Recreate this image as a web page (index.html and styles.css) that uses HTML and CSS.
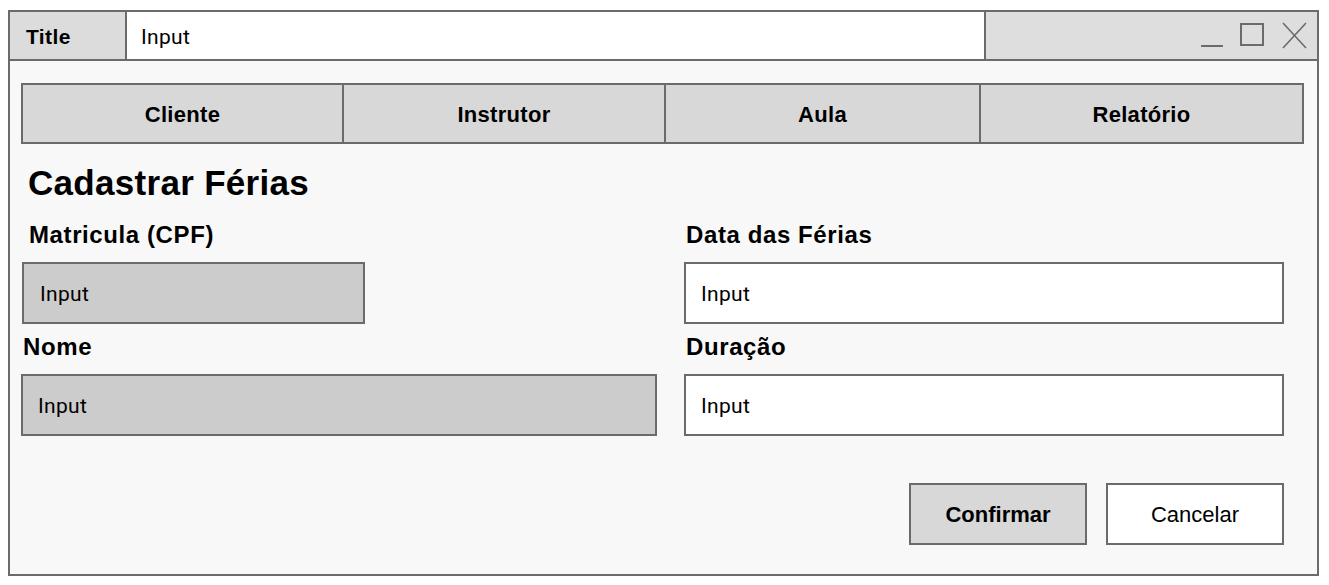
FILE: index.html
```html
<!DOCTYPE html>
<html lang="pt">
<head>
<meta charset="utf-8">
<title>Cadastrar Férias</title>
<link rel="stylesheet" href="styles.css">
</head>
<body>
<div class="window">
  <div class="titlebar">
    <div class="title-cell">Title</div>
    <div class="title-input">Input</div>
    <div class="controls">
      <svg width="110" height="30" viewBox="0 0 110 30" class="ctrl-icons">
        <line x1="4" y1="24" x2="26" y2="24" stroke="#6b6b6b" stroke-width="2"/>
        <rect x="44" y="2" width="22" height="21" fill="none" stroke="#6b6b6b" stroke-width="2"/>
        <line x1="86" y1="1" x2="109" y2="26" stroke="#6b6b6b" stroke-width="1.6"/>
        <line x1="109" y1="1" x2="86" y2="26" stroke="#6b6b6b" stroke-width="1.6"/>
      </svg>
    </div>
  </div>
  <div class="content">
    <nav class="tabs">
      <div class="tab">Cliente</div>
      <div class="tab">Instrutor</div>
      <div class="tab">Aula</div>
      <div class="tab">Relatório</div>
    </nav>
    <h1 class="heading">Cadastrar Férias</h1>
    <div class="form">
      <div class="field">
        <label class="label label-indent">Matricula (CPF)</label>
        <div class="input input-grey input-short">Input</div>
      </div>
      <div class="field">
        <label class="label">Data das Férias</label>
        <div class="input">Input</div>
      </div>
      <div class="field">
        <label class="label">Nome</label>
        <div class="input input-grey">Input</div>
      </div>
      <div class="field">
        <label class="label">Duração</label>
        <div class="input">Input</div>
      </div>
    </div>
    <div class="actions">
      <button class="btn btn-primary">Confirmar</button>
      <button class="btn">Cancelar</button>
    </div>
  </div>
</div>
</body>
</html>
```

FILE: styles.css
```css
html, body {
  margin: 0;
  padding: 0;
  background: #ffffff;
}

body {
  font-family: "Liberation Sans", Arial, sans-serif;
  color: #000;
}

.window {
  margin: 10px 0 0 8px;
  width: 1311px;
  height: 566px;
  box-sizing: border-box;
  border: 2px solid #6b6b6b;
  background: #f8f8f8;
  display: flex;
  flex-direction: column;
}

.titlebar {
  display: flex;
  height: 47px;
  border-bottom: 2px solid #6b6b6b;
  flex: none;
}

.title-cell {
  width: 117px;
  box-sizing: border-box;
  background: #dcdcdc;
  border-right: 2px solid #6b6b6b;
  padding: 3px 0 0 16px;
  display: flex;
  align-items: center;
  font-weight: bold;
  font-size: 21px;
  letter-spacing: 0.4px;
}

.title-input {
  width: 859px;
  box-sizing: border-box;
  background: #ffffff;
  border-right: 2px solid #6b6b6b;
  padding: 2px 0 0 14px;
  display: flex;
  align-items: center;
  font-family: Roboto, "Liberation Sans", sans-serif;
  font-size: 21px;
  letter-spacing: 0.3px;
}

.controls {
  flex: 1;
  background: #dedede;
  display: flex;
  align-items: center;
  justify-content: flex-end;
  padding-right: 10px;
}

.ctrl-icons {
  display: block;
  margin-top: 2px;
}

.content {
  flex: 1;
  padding: 22px 13px 0 11px;
  display: flex;
  flex-direction: column;
}

.tabs {
  display: grid;
  grid-template-columns: 319px 322px 315px 1fr;
  height: 61px;
  box-sizing: border-box;
  border: 2px solid #6b6b6b;
  background: #d8d8d8;
}

.tab {
  display: flex;
  align-items: center;
  justify-content: center;
  padding-top: 2px;
  font-weight: bold;
  font-size: 22px;
  letter-spacing: 0.3px;
  border-left: 2px solid #6b6b6b;
}

.tab:first-child {
  border-left: none;
}

.heading {
  margin: 20px 0 0 7px;
  font-size: 35px;
  font-weight: bold;
  line-height: 38px;
  letter-spacing: 0.3px;
}

.form {
  margin-top: 20px;
  display: grid;
  grid-template-columns: 636px 600px;
  column-gap: 27px;
  row-gap: 10px;
}

.field {
  display: flex;
  flex-direction: column;
}

.label {
  font-weight: bold;
  font-size: 24px;
  line-height: 26px;
  letter-spacing: 0.6px;
  margin: 0 0 14px 2px;
}

.label-indent {
  margin-left: 8px;
}

.input {
  height: 62px;
  box-sizing: border-box;
  border: 2px solid #6b6b6b;
  background: #ffffff;
  padding: 2px 0 0 15px;
  display: flex;
  align-items: center;
  font-family: Roboto, "Liberation Sans", sans-serif;
  font-size: 21px;
  letter-spacing: 0.3px;
}

.input-grey {
  background: #cccccc;
}

.input-short {
  width: 343px;
  margin-left: 1px;
  padding-left: 16px;
}

.actions {
  margin-top: 47px;
  display: flex;
  justify-content: flex-end;
  gap: 19px;
  padding-right: 20px;
}

.btn {
  width: 178px;
  height: 62px;
  box-sizing: border-box;
  border: 2px solid #6b6b6b;
  background: #ffffff;
  font-family: "Liberation Sans", Arial, sans-serif;
  font-size: 22px;
  color: #000;
  padding: 2px 0 0;
}

.btn-primary {
  background: #d8d8d8;
  font-weight: bold;
}
```
